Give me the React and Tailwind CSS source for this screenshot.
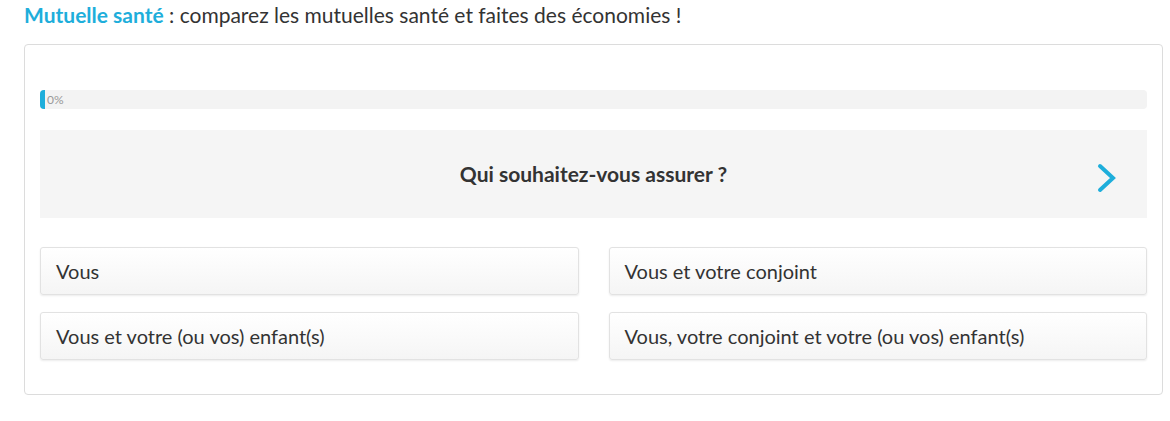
import React from 'react';

const options = [
  'Vous',
  'Vous et votre conjoint',
  'Vous et votre (ou vos) enfant(s)',
  'Vous, votre conjoint et votre (ou vos) enfant(s)',
];

export default function App() {
  return (
    <div className="min-h-screen bg-white font-['Lato','Liberation_Sans',sans-serif] text-[#333]">
      <div className="pl-[24px] pr-[7px]">
        <h1 className="h-[30px] text-[21px] leading-[30px]">
          <span className="font-bold text-[#1eaedb]">Mutuelle santé</span>
          <span> : comparez les mutuelles santé et faites des économies !</span>
        </h1>

        <div className="mt-[14px] h-[351px] rounded-[4px] border border-[#dcdcdc] px-[15px] pt-[45px]">
          {/* progress */}
          <div className="flex h-[19px] items-center rounded-[4px] bg-[#f3f3f3]">
            <div className="h-full w-[5px] rounded-l-[4px] bg-[#1eaedb]" />
            <span className="ml-[2px] text-[12px] leading-none text-[#999]">0%</span>
          </div>

          {/* question */}
          <div className="relative mt-[21px] flex h-[88px] items-center justify-center bg-[#f5f5f5]">
            <h2 className="text-[21px] font-bold text-[#333]">Qui souhaitez-vous assurer ?</h2>
            <svg
              className="absolute right-[29px] top-[33px]"
              width="22"
              height="30"
              viewBox="0 0 22 30"
              fill="none"
            >
              <path d="M4 3 L17 15 L4 27" stroke="#1eaedb" strokeWidth="4" strokeLinecap="round" strokeLinejoin="miter" />
            </svg>
          </div>

          {/* options */}
          <div className="mt-[29px] grid grid-cols-2 gap-x-[30px] gap-y-[17px]">
            {options.map((o) => (
              <button
                key={o}
                type="button"
                className="flex h-[48px] items-center rounded-[3px] border border-[#e2e2e2] bg-gradient-to-b from-white to-[#f5f5f5] pl-[15px] text-left text-[20px] text-[#333] shadow-[0_1px_2px_rgba(0,0,0,0.08)]"
              >
                {o}
              </button>
            ))}
          </div>
        </div>
      </div>
    </div>
  );
}
